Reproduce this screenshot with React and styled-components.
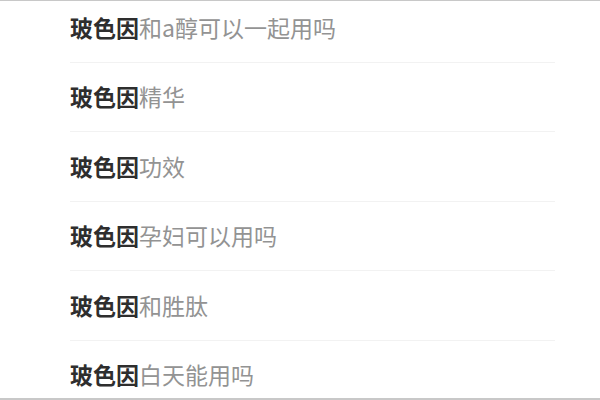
import React from "react";
import styled, { createGlobalStyle } from "styled-components";

const GlobalStyle = createGlobalStyle`
  html, body {
    margin: 0;
    padding: 0;
    background: #fff;
  }
  body {
    font-family: "Noto Sans CJK SC", "Noto Sans", sans-serif;
  }
`;

const Frame = styled.div`
  width: 600px;
  height: 400px;
  box-sizing: border-box;
  border-top: 1px solid #c8c8c8;
  border-bottom: 2px solid #c8c8c8;
  overflow: hidden;
  background: #fff;
`;

const List = styled.ul`
  list-style: none;
  margin: -8px 0 0 0;
  padding: 0 45px 0 70px;
`;

const Row = styled.li`
  height: 69.5px;
  box-sizing: border-box;
  display: flex;
  align-items: center;
  border-bottom: 1.5px solid #f2f2f2;
  font-size: 23px;
  line-height: 1;
  white-space: nowrap;
`;

const Keyword = styled.span`
  font-weight: 700;
  color: #2e2e2e;
`;

const Rest = styled.span`
  font-weight: 400;
  color: #939393;
`;

const items = [
  "和a醇可以一起用吗",
  "精华",
  "功效",
  "孕妇可以用吗",
  "和胜肽",
  "白天能用吗",
];

const App = () => {
  return (
    <>
      <GlobalStyle />
      <Frame>
        <List>
          {items.map((item) => (
            <Row key={item}>
              <Keyword>玻色因</Keyword>
              <Rest>{item}</Rest>
            </Row>
          ))}
        </List>
      </Frame>
    </>
  );
};

export default App;
